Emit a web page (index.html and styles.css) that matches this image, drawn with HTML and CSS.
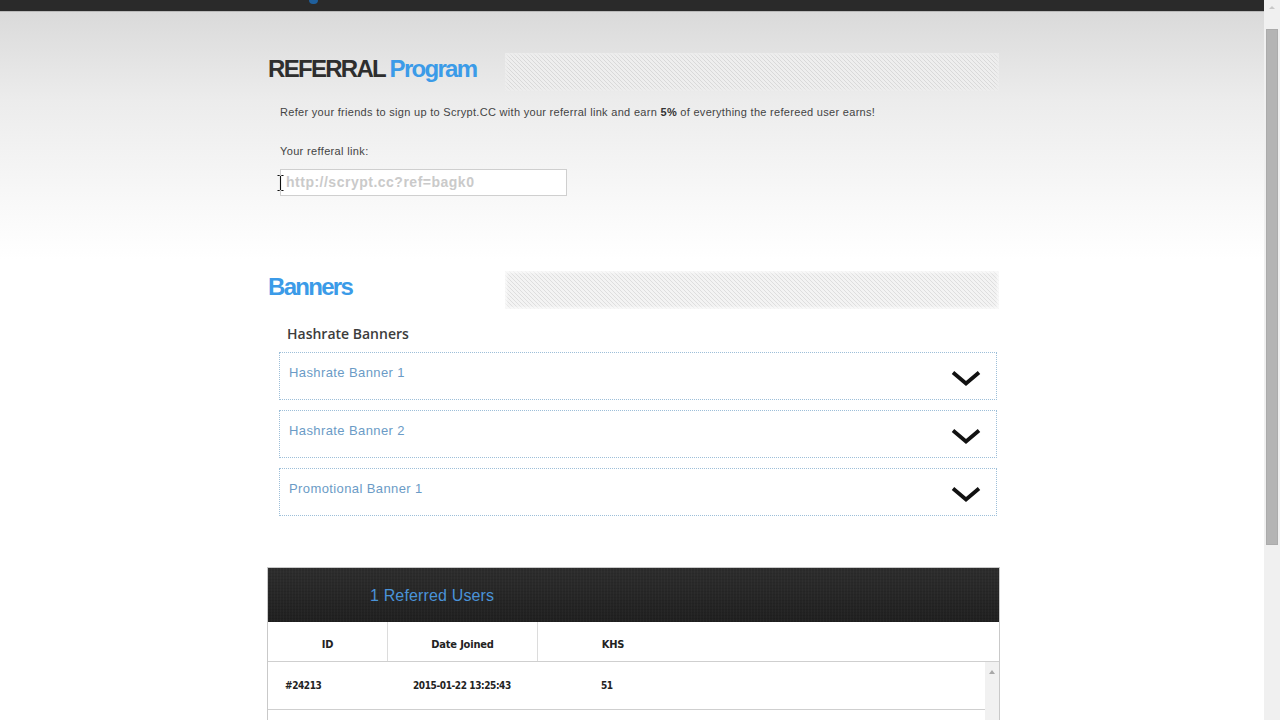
FILE: index.html
```html
<!DOCTYPE html>
<html lang="en">
<head>
<meta charset="utf-8">
<title>Referral Program</title>
<link rel="stylesheet" href="styles.css">
</head>
<body>
<div class="window">
  <div class="page">
    <div class="topbar"><span class="logo-dot"></span></div>
    <main class="content">
      <section class="referral">
        <div class="section-head">
          <h1 class="title">REFERRAL <span class="blue">Program</span></h1>
          <div class="stripes"></div>
        </div>
        <p class="desc">Refer your friends to sign up to Scrypt.CC with your referral link and earn <b>5%</b> of everything the refereed user earns!</p>
        <p class="link-label">Your refferal link:</p>
        <div class="input-wrap">
          <input class="ref-input" type="text" placeholder="http://scrypt.cc?ref=bagk0">
          <svg class="ibeam" width="7" height="16" viewBox="0 0 7 16"><path d="M0.5 0.5h2.2M4.3 0.5h2.2M3.5 1v14M0.5 15.5h2.2M4.3 15.5h2.2" stroke="#111" stroke-width="1.1" fill="none"/></svg>
        </div>
      </section>

      <section class="banners">
        <div class="section-head">
          <h2 class="title blue">Banners</h2>
          <div class="stripes"></div>
        </div>
        <h3 class="sub">Hashrate Banners</h3>
        <div class="accordion">
          <div class="acc-item"><span>Hashrate Banner 1</span><svg class="chev" width="30" height="16" viewBox="0 0 30 16"><path d="M2 2.5L15 13.5L28 2.5" fill="none" stroke="#111" stroke-width="3.8"/></svg></div>
          <div class="acc-item"><span>Hashrate Banner 2</span><svg class="chev" width="30" height="16" viewBox="0 0 30 16"><path d="M2 2.5L15 13.5L28 2.5" fill="none" stroke="#111" stroke-width="3.8"/></svg></div>
          <div class="acc-item"><span>Promotional Banner 1</span><svg class="chev" width="30" height="16" viewBox="0 0 30 16"><path d="M2 2.5L15 13.5L28 2.5" fill="none" stroke="#111" stroke-width="3.8"/></svg></div>
        </div>
      </section>

      <section class="users">
        <div class="users-head">1 Referred Users</div>
        <div class="users-cols">
          <div class="col">ID</div>
          <div class="col">Date Joined</div>
          <div class="col last">KHS</div>
          <div class="col fill"></div>
        </div>
        <div class="users-body">
          <div class="rows">
            <div class="row"><span>#24213</span><span>2015-01-22 13:25:43</span><span>51</span></div>
            <div class="row"></div>
          </div>
          <div class="inner-scroll"><span class="arrow-up"></span></div>
        </div>
      </section>
    </main>
  </div>
  <div class="scrollbar">
    <div class="sb-top"><span class="sb-arrow"></span></div>
    <div class="sb-thumb"></div>
  </div>
</div>
</body>
</html>
```

FILE: styles.css
```css
* { box-sizing: border-box; }
html, body { margin: 0; padding: 0; height: 100%; overflow: hidden; }
body { font-family: "Liberation Sans", Arial, sans-serif; color: #333; background: #fff; }

.window { display: flex; height: 720px; width: 1280px; }
.page {
  width: 1264px;
  height: 720px;
  overflow: hidden;
  background: linear-gradient(#dadada 12px, #ececec 100px, #f7f7f7 190px, #ffffff 260px);
}
.scrollbar { width: 16px; background: #f0f0f0; display: flex; flex-direction: column; align-items: center; }
.sb-top { height: 29px; width: 100%; display: flex; justify-content: center; padding-top: 6px; }
.sb-arrow { width: 0; height: 0; border-left: 3px solid transparent; border-right: 3px solid transparent; border-bottom: 3px solid #c8c8c8; }
.sb-thumb { width: 12px; height: 516px; background: #b4b4b4; border: 1px solid #ababab; }

.topbar { height: 12px; background: #2a2a2a; border-bottom: 1px solid #b9b9b9; padding-left: 309px; }
.logo-dot { display: block; width: 9px; height: 4px; background: #1f5f9c; border-radius: 0 0 5px 5px; }

.content { padding-left: 267px; padding-top: 41px; width: 1000px; }

.section-head { display: flex; justify-content: space-between; align-items: center; height: 38px; width: 732px; }
.title {
  margin: 0 0 0 1px;
  font-family: "Liberation Sans", Arial, sans-serif;
  font-weight: bold;
  font-size: 24px;
  letter-spacing: -1.7px;
  color: #2e2e2e;
  line-height: 30px;
  padding-bottom: 7px;
}
.blue { color: #3b9be8; }
.stripes {
  width: 494px;
  height: 38px;
  background-color: #eeeeee;
  background-image: linear-gradient(45deg, #eeeeee 0 38%, #d9d9d9 38% 62%, #eeeeee 62% 100%);
  background-size: 4px 4px;
  box-shadow: inset 0 0 3px 2px rgba(236,236,236,0.85);
}
.banners .stripes {
  background-color: #f3f3f3;
  background-image: linear-gradient(45deg, #f3f3f3 0 38%, #dedede 38% 62%, #f3f3f3 62% 100%);
  box-shadow: inset 0 0 3px 2px rgba(250,250,250,0.85);
}

.desc { margin: 14px 0 0 13px; font-size: 11px; line-height: 14px; color: #444; letter-spacing: 0.3px; }
.desc b { color: #333; }
.link-label { margin: 25px 0 0 13px; font-size: 11px; line-height: 14px; color: #444; letter-spacing: 0.35px; }
.input-wrap { position: relative; margin: 11px 0 0 13px; width: 287px; }
.ref-input {
  display: block;
  width: 287px;
  height: 27px;
  border: 1px solid #cfcfcf;
  background: #fff;
  padding: 0 0 1px 5px;
  font-family: "Liberation Sans", Arial, sans-serif;
  font-weight: bold;
  font-size: 14px;
  letter-spacing: 0.5px;
  color: #444;
  outline: none;
}
.ref-input::placeholder { color: #cacaca; }
.ibeam { position: absolute; left: -3px; top: 6px; }

.banners { margin-top: 75px; }
.sub { margin: 16px 0 0 20px; font-family: "Open Sans", "Liberation Sans", sans-serif; font-weight: 600; font-size: 14px; line-height: 18px; color: #3c3c3c; }
.accordion { margin: 9px 0 0 12px; width: 718px; display: flex; flex-direction: column; gap: 10px; }
.acc-item {
  height: 48px;
  border: 1px dotted #9dbfd9;
  background: #fff;
  display: flex;
  justify-content: space-between;
  align-items: flex-start;
  padding: 12px 15px 0 9px;
}
.acc-item span { font-family: "Liberation Sans", Arial, sans-serif; font-size: 13px; line-height: 16px; color: #6b9bc6; letter-spacing: 0.4px; }
.chev { margin-top: 5px; }

.users { margin-top: 51px; width: 733px; border: 1px solid #c9c9c9; border-bottom: none; background: #fff; }
.users-head {
  height: 54px;
  background:
    repeating-linear-gradient(90deg, rgba(255,255,255,0.025) 0 1px, transparent 1px 3px),
    repeating-linear-gradient(0deg, rgba(0,0,0,0.08) 0 1px, transparent 1px 3px),
    linear-gradient(#2d2d2d, #202020);
  color: #4a93d8;
  font-size: 16px;
  line-height: 56px;
  padding-left: 102px;
  letter-spacing: 0.15px;
}
.users-cols { display: grid; grid-template-columns: 120px 150px 150px 1fr; height: 40px; border-bottom: 1px solid #cfcfcf; }
.col {
  font-family: "Liberation Sans Narrow", "DejaVu Sans Condensed", sans-serif;
  font-weight: bold;
  font-size: 11px;
  color: #222;
  display: flex;
  align-items: center;
  justify-content: center;
  padding-top: 5px;
  letter-spacing: -0.2px;
  border-right: 1px solid #dcdcdc;
}
.col.last, .col.fill { border-right: none; }
.users-body { display: flex; height: 80px; }
.rows { flex: 1; }
.row {
  height: 48px;
  border-bottom: 1px solid #cfcfcf;
  display: grid;
  grid-template-columns: 128px 188px 1fr;
  align-items: center;
  padding-left: 17px;
  padding-bottom: 1px;
  font-family: "Liberation Sans Narrow", "DejaVu Sans Condensed", sans-serif;
  font-weight: bold;
  font-size: 10px;
  letter-spacing: -0.4px;
  color: #222;
}
.inner-scroll { width: 14px; background: #f1f1f1; display: flex; justify-content: center; padding-top: 8px; }
.arrow-up { width: 0; height: 0; border-left: 3px solid transparent; border-right: 3px solid transparent; border-bottom: 4px solid #a8a8a8; }
```
